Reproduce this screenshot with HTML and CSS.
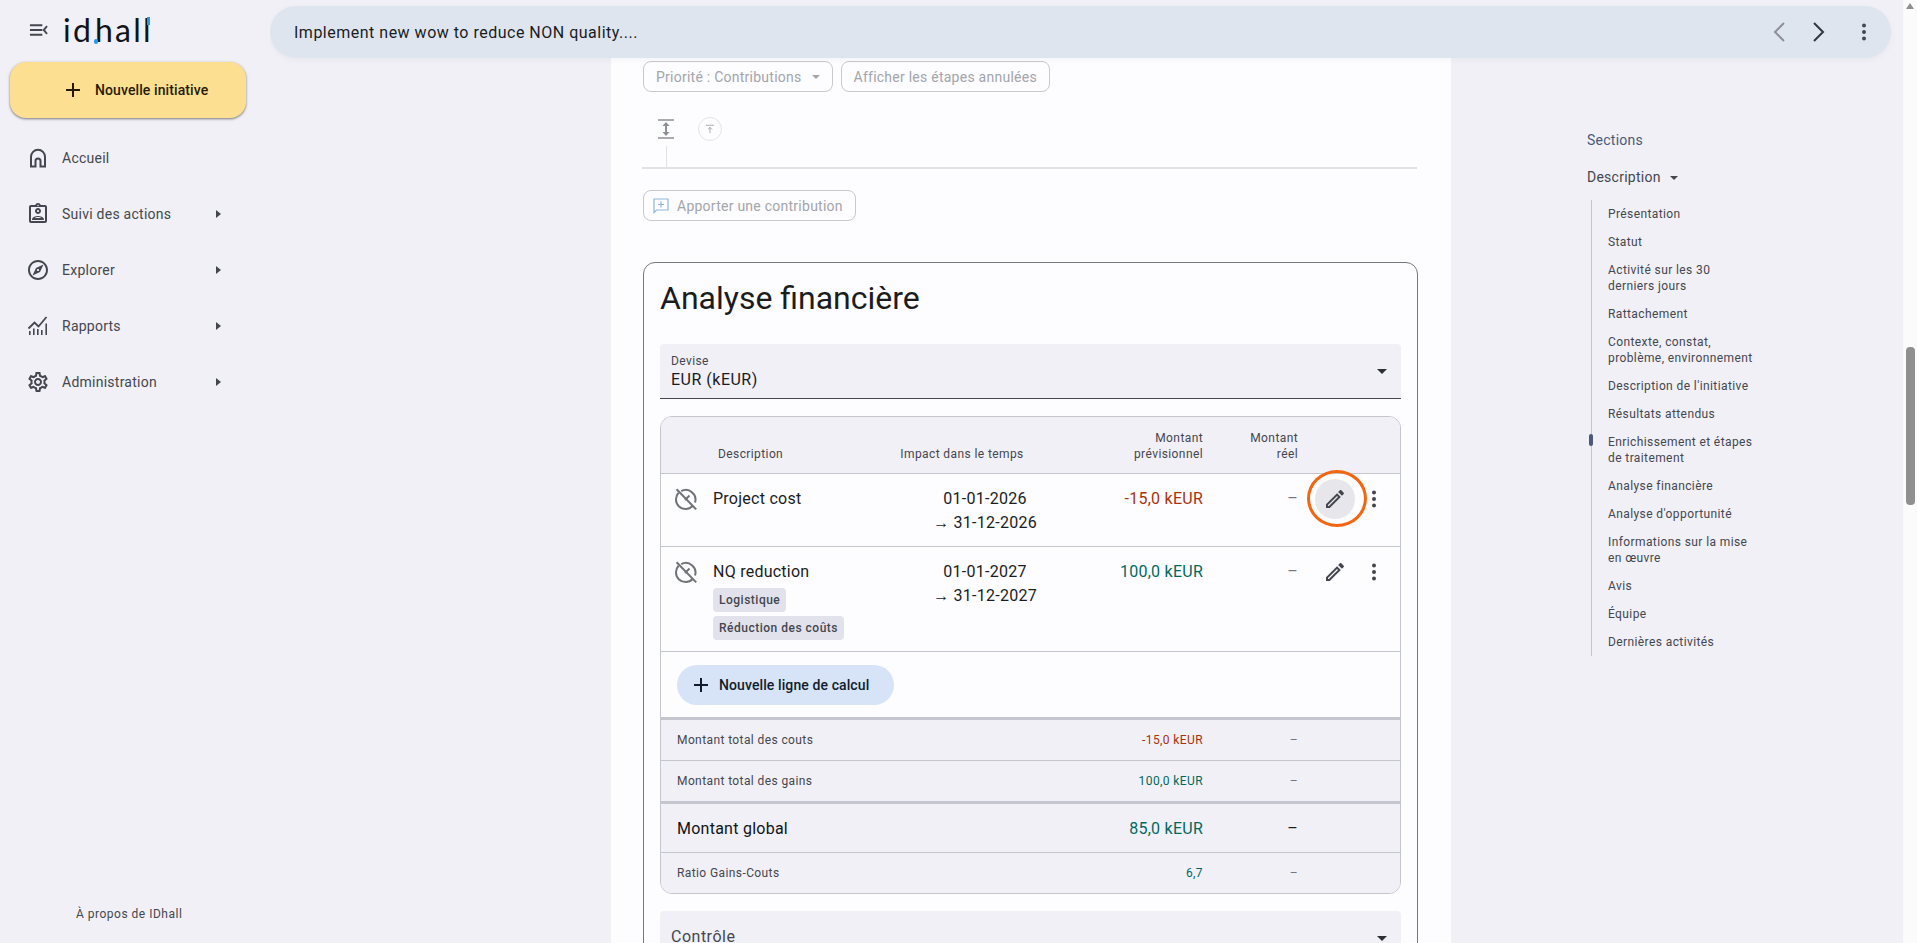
FILE: index.html
```html
<!DOCTYPE html>
<html lang="fr">
  <head>
    <meta charset="UTF-8" />
    <meta name="viewport" content="width=device-width, initial-scale=1.0" />
    <title>IDhall - Analyse financière</title>
    <link rel="stylesheet" href="styles.css">
  </head>
  <body>
    <!-- Shared icons -->
    <svg class="sprite" xmlns="http://www.w3.org/2000/svg">
      <symbol id="i-edit" viewBox="0 0 24 24"><path d="M3 17.25V21h3.75L17.81 9.94l-3.75-3.75L3 17.25zM5.92 19H5v-.92l9.06-9.06.92.92L5.92 19zM20.71 5.63l-2.34-2.34c-.2-.2-.45-.29-.71-.29s-.51.1-.7.29l-1.83 1.83 3.75 3.75 1.83-1.83c.39-.39.39-1.02 0-1.41z"/></symbol>
      <symbol id="i-more" viewBox="0 0 24 24"><circle cx="12" cy="5.5" r="2"/><circle cx="12" cy="12" r="2"/><circle cx="12" cy="18.5" r="2"/></symbol>
      <symbol id="i-plus" viewBox="0 0 24 24"><path d="M19 13h-6v6h-2v-6H5v-2h6V5h2v6h6v2z"/></symbol>
      <symbol id="i-gauge-off" viewBox="0 0 24 24"><g fill="none" stroke="currentColor" stroke-width="2"><path d="M7.2 4.2A9.6 9.6 0 0 1 21 15.5M18.6 19A9.6 9.6 0 0 1 4.6 5.8"/><path d="M2.6 2.2l19.6 20.2"/><path d="M11 13l4.5-4.5"/></g></symbol>
    </svg>

    <div class="app">
      <aside class="sidebar">
        <div class="brand">
          <svg class="menu-toggle" viewBox="0 0 20 14"><path d="M1 2h13M1 7h13M1 12h13M19 3l-3.5 4 3.5 4" fill="none" stroke="#44474f" stroke-width="2"/></svg>
          <div class="logo">
            <span>id</span><span class="logo-h">h</span><span>all</span>
            <i class="logo-dot"></i>
            <i class="logo-tip"></i>
          </div>
        </div>

        <button class="new-initiative">
          <svg class="icon"><use href="#i-plus"/></svg>
          Nouvelle initiative
        </button>

        <nav class="nav">
          <a class="nav-item">
            <svg class="icon" viewBox="0 0 24 24"><path d="M5 20.5V10.8a7 7 0 0 1 14 0v9.700h-4.500V15a2.500 2.500 0 0 0-5 0v5.500z" fill="none" stroke="currentColor" stroke-width="2"/></svg>
            <span>Accueil</span>
          </a>
          <a class="nav-item">
            <svg class="icon" viewBox="0 0 24 24"><path d="M19 3h-4.180C14.400 1.840 13.300 1 12 1s-2.400.84-2.820 2H5c-1.100 0-2 .9-2 2v14c0 1.100.9 2 2 2h14c1.100 0 2-.9 2-2V5c0-1.100-.9-2-2-2zm-7-.25c.41 0 .75.34.75.75s-.34.75-.75.75-.75-.34-.75-.75.34-.75.75-.75zM19 19H5V5h14v14zm-7-7c1.650 0 3-1.350 3-3s-1.350-3-3-3-3 1.350-3 3 1.350 3 3 3zm0-4c.55 0 1 .45 1 1s-.45 1-1 1-1-.45-1-1 .45-1 1-1zm6 9.590c0-2.500-3.970-3.580-6-3.580s-6 1.070-6 3.580V18h12v-.41zM8.480 16c.74-.51 2.230-1 3.520-1s2.780.49 3.520 1H8.480z"/></svg>
            <span>Suivi des actions</span>
            <b class="caret-right"></b>
          </a>
          <a class="nav-item">
            <svg class="icon" viewBox="0 0 24 24"><path d="M12 2C6.480 2 2 6.480 2 12s4.480 10 10 10 10-4.480 10-10S17.520 2 12 2zm0 18c-4.410 0-8-3.590-8-8s3.590-8 8-8 8 3.590 8 8-3.590 8-8 8zm-5.500-2.500l7.510-3.490L17.500 6.500 9.990 9.990 6.500 17.500zm5.500-6.600c.61 0 1.100.49 1.100 1.100s-.49 1.100-1.100 1.100-1.100-.49-1.100-1.100.49-1.100 1.100-1.100z"/></svg>
            <span>Explorer</span>
            <b class="caret-right"></b>
          </a>
          <a class="nav-item">
            <svg class="icon" viewBox="0 0 24 24"><path d="M3 21v-4h1.600v4zM7 21v-6.500h1.600V21zM11 21v-6h1.600v6zM15 21v-5h1.600v5zM19.400 21V9.500H21V21z"/><path d="M2.500 14.500l6-6 4 4L20.500 3" fill="none" stroke="currentColor" stroke-width="1.800"/></svg>
            <span>Rapports</span>
            <b class="caret-right"></b>
          </a>
          <a class="nav-item">
            <svg class="icon" viewBox="0 0 24 24"><path d="M19.430 12.980c.04-.32.07-.64.07-.98 0-.34-.03-.66-.07-.98l2.110-1.650c.19-.15.24-.42.12-.64l-2-3.460c-.09-.16-.26-.25-.44-.25-.06 0-.12.01-.17.03l-2.490 1c-.52-.4-1.080-.73-1.690-.98l-.38-2.650C14.460 2.180 14.250 2 14 2h-4c-.25 0-.46.18-.49.42l-.38 2.650c-.61.25-1.170.59-1.690.98l-2.490-1c-.06-.02-.12-.03-.18-.03-.17 0-.34.09-.43.25l-2 3.460c-.13.22-.07.49.12.64l2.110 1.650c-.04.32-.07.65-.07.98 0 .33.03.66.07.98l-2.110 1.650c-.19.15-.24.42-.12.64l2 3.460c.09.16.26.25.44.25.06 0 .12-.01.17-.03l2.490-1c.52.4 1.080.73 1.690.98l.38 2.650c.03.24.24.42.49.42h4c.25 0 .46-.18.49-.42l.38-2.650c.61-.25 1.170-.59 1.690-.98l2.490 1c.06.02.12.03.18.03.17 0 .34-.09.43-.25l2-3.460c.12-.22.07-.49-.12-.64l-2.110-1.650zm-1.980-1.710c.04.31.05.52.05.73 0 .21-.02.43-.05.73l-.14 1.130.89.7 1.080.84-.7 1.210-1.270-.51-1.040-.42-.9.68c-.43.32-.84.56-1.250.73l-1.060.43-.16 1.130-.2 1.350h-1.400l-.19-1.350-.16-1.130-1.060-.43c-.43-.18-.83-.41-1.230-.71l-.91-.7-1.060.43-1.270.51-.7-1.210 1.080-.84.89-.7-.14-1.130c-.03-.31-.05-.54-.05-.74s.02-.43.05-.73l.14-1.130-.89-.7-1.080-.84.7-1.210 1.270.51 1.040.42.9-.68c.43-.32.84-.56 1.250-.73l1.060-.43.16-1.130.2-1.350h1.390l.19 1.350.16 1.130 1.060.43c.43.18.83.41 1.230.71l.91.7 1.060-.43 1.270-.51.7 1.210-1.070.85-.89.7.14 1.130zM12 8c-2.210 0-4 1.790-4 4s1.790 4 4 4 4-1.790 4-4-1.790-4-4-4zm0 6c-1.100 0-2-.9-2-2s.9-2 2-2 2 .9 2 2-.9 2-2 2z"/></svg>
            <span>Administration</span>
            <b class="caret-right"></b>
          </a>
        </nav>

        <div class="about">À propos de IDhall</div>
      </aside>

      <div class="workspace">
        <header class="topbar">
          <div class="topbar-title">Implement new wow to reduce NON quality....</div>
          <svg class="chevron chevron-off" viewBox="0 0 14 24"><path d="M12 3L3 12l9 9" /></svg>
          <svg class="chevron" viewBox="0 0 14 24"><path d="M2 3l9 9-9 9" /></svg>
          <svg class="icon topbar-more"><use href="#i-more"/></svg>
        </header>

        <div class="content">
          <main class="panel">
            <div class="filters">
              <div class="ghost-btn">Priorité : Contributions <b class="caret-down"></b></div>
              <div class="ghost-btn">Afficher les étapes annulées</div>
            </div>

            <div class="timeline-tools">
              <svg class="tool-expand" viewBox="0 0 16 20"><path d="M0 1h16M0 19h16" stroke="#8e9098" stroke-width="1.500"/><path d="M8 3l3.500 4H9v6h2.500L8 17l-3.500-4H7V7H4.500z" fill="#8e9098"/></svg>
              <div class="tool-top">
                <svg viewBox="0 0 12 12"><path d="M1 1.500h10M6 11V4M3.500 6.500L6 4l2.500 2.500" fill="none" stroke="#9a9ca4" stroke-width="1"/></svg>
              </div>
            </div>
            <div class="timeline-stem"></div>

            <div class="ghost-btn contribute">
              <svg viewBox="0 0 16 16"><path d="M1 1h14v11H3.500L1 14.500z M8 3.500v6M5 6.500h6" fill="none" stroke="#8fb8dc" stroke-width="1.200"/></svg>
              Apporter une contribution
            </div>

            <section class="card">
              <h2 class="card-title">Analyse financière</h2>

              <div class="select-field">
                <label>Devise</label>
                <div class="select-value">EUR (kEUR)</div>
                <b class="caret-down dark"></b>
              </div>

              <div class="calc-table">
                <div class="calc-row calc-head">
                  <div></div>
                  <div class="head-desc">Description</div>
                  <div class="head-impact">Impact dans le temps</div>
                  <div class="num">Montant<br>prévisionnel</div>
                  <div class="num">Montant<br>réel</div>
                  <div></div>
                </div>

                <div class="calc-row line first-line">
                  <svg class="icon gauge"><use href="#i-gauge-off"/></svg>
                  <div class="line-name">Project cost</div>
                  <div class="line-dates">01-01-2026<br>→ 31-12-2026</div>
                  <div class="num cost">-15,0 kEUR</div>
                  <div class="num muted">–</div>
                  <div class="line-actions">
                    <span class="edit-btn active">
                      <svg class="icon"><use href="#i-edit"/></svg>
                      <i class="ring"></i>
                    </span>
                    <svg class="icon"><use href="#i-more"/></svg>
                  </div>
                </div>

                <div class="calc-row line second-line">
                  <svg class="icon gauge"><use href="#i-gauge-off"/></svg>
                  <div class="line-name">
                    NQ reduction
                    <span class="tag">Logistique</span>
                    <span class="tag">Réduction des coûts</span>
                  </div>
                  <div class="line-dates">01-01-2027<br>→ 31-12-2027</div>
                  <div class="num gain">100,0 kEUR</div>
                  <div class="num muted">–</div>
                  <div class="line-actions">
                    <span class="edit-btn">
                      <svg class="icon"><use href="#i-edit"/></svg>
                    </span>
                    <svg class="icon"><use href="#i-more"/></svg>
                  </div>
                </div>

                <div class="add-row">
                  <button class="add-line">
                    <svg class="icon"><use href="#i-plus"/></svg>
                    Nouvelle ligne de calcul
                  </button>
                </div>

                <div class="calc-row total heavy">
                  <div class="total-name">Montant total des couts</div>
                  <div class="num cost">-15,0 kEUR</div>
                  <div class="num muted">–</div>
                </div>
                <div class="calc-row total">
                  <div class="total-name">Montant total des gains</div>
                  <div class="num gain">100,0 kEUR</div>
                  <div class="num muted">–</div>
                </div>
                <div class="calc-row total global heavy">
                  <div class="total-name">Montant global</div>
                  <div class="num gain">85,0 kEUR</div>
                  <div class="num">–</div>
                </div>
                <div class="calc-row total">
                  <div class="total-name">Ratio Gains-Couts</div>
                  <div class="num gain">6,7</div>
                  <div class="num muted">–</div>
                </div>
              </div>

              <div class="select-field control">
                <div class="control-value">Contrôle</div>
                <b class="caret-down dark"></b>
              </div>
            </section>
          </main>

          <aside class="toc">
            <div class="toc-title">Sections</div>
            <div class="toc-group">Description <b class="caret-down"></b></div>
            <ul class="toc-list">
              <li>Présentation</li>
              <li>Statut</li>
              <li>Activité sur les 30<br>derniers jours</li>
              <li>Rattachement</li>
              <li>Contexte, constat,<br>problème, environnement</li>
              <li>Description de l'initiative</li>
              <li>Résultats attendus</li>
              <li class="current">Enrichissement et étapes<br>de traitement</li>
              <li>Analyse financière</li>
              <li>Analyse d'opportunité</li>
              <li>Informations sur la mise<br>en œuvre</li>
              <li>Avis</li>
              <li>Équipe</li>
              <li>Dernières activités</li>
            </ul>
          </aside>
        </div>
      </div>

      <div class="scrollbar">
        <b class="scroll-up"></b>
        <div class="scroll-thumb"></div>
      </div>
    </div>
  </body>
</html>
```

FILE: styles.css
```css
* {
  box-sizing: border-box;
}
body {
  margin: 0;
  background-color: #f0f0f6;
  color: #1a1c1e;
  font-family: Roboto, "Liberation Sans", sans-serif;
  overflow: hidden;
}
.sprite {
  display: none;
}
.icon {
  width: 24px;
  height: 24px;
  flex: none;
  fill: currentColor;
}
.app {
  display: flex;
  height: 943px;
}

/* Sidebar */
.sidebar {
  width: 270px;
  flex: none;
  display: flex;
  flex-direction: column;
  position: relative;
}
.brand {
  display: flex;
  align-items: center;
  height: 62px;
  padding: 0 0 3px 29px;
}
.menu-toggle {
  width: 19px;
  height: 14px;
}
.logo {
  position: relative;
  margin-left: 15px;
  font-family: Lato, sans-serif;
  font-weight: 400;
  font-size: 32px;
  line-height: 32px;
  letter-spacing: 2.2px;
  color: #101418;
}
.logo-h {
  margin-left: 2px;
}
.logo-dot {
  position: absolute;
  left: 31px;
  top: 25px;
  width: 4px;
  height: 5px;
  background-color: #1e9bf0;
  border-radius: 2px;
}
.logo-tip {
  position: absolute;
  right: 3px;
  top: 3px;
  width: 3px;
  height: 8px;
  background-color: #1e9bf0;
}
.new-initiative {
  display: flex;
  align-items: center;
  gap: 10px;
  width: 236px;
  height: 56px;
  margin-left: 10px;
  padding: 0 0 0 51px;
  border: 0;
  border-radius: 16px;
  background-color: #fddf92;
  box-shadow: 0 1px 3px rgba(0, 0, 0, 0.35), 0 1px 2px rgba(0, 0, 0, 0.2);
  color: #241a00;
  font-family: inherit;
  font-size: 14px;
  font-weight: 500;
  letter-spacing: 0.1px;
}
.nav {
  margin-top: 12px;
}
.nav-item {
  display: flex;
  align-items: center;
  height: 56px;
  padding-left: 26px;
  color: #44474f;
  font-size: 14px;
  font-weight: 400;
  letter-spacing: 0.25px;
}
.nav-item span {
  width: 150px;
  margin-left: 12px;
}
.caret-right {
  width: 0;
  height: 0;
  margin-left: 4px;
  border-left: 5px solid #44474f;
  border-top: 4px solid transparent;
  border-bottom: 4px solid transparent;
}
.about {
  margin-top: auto;
  padding: 0 0 22px 76px;
  color: #44474f;
  font-size: 12px;
  letter-spacing: 0.5px;
}

/* Workspace */
.workspace {
  flex: 1;
  min-width: 0;
  display: flex;
  flex-direction: column;
  height: 943px;
  overflow: hidden;
}
.topbar {
  position: relative;
  z-index: 2;
  display: flex;
  align-items: center;
  flex: none;
  height: 52px;
  margin: 6px 12px 0 0;
  padding: 0 15px 0 24px;
  border-radius: 26px;
  background-color: #dfe5ef;
  box-shadow: 0 2px 6px rgba(0, 0, 0, 0.04);
  color: #1a1c1e;
  font-size: 16px;
  letter-spacing: 0.5px;
}
.topbar-title {
  flex: 1;
}
.chevron {
  width: 14px;
  height: 24px;
  margin-right: 26px;
  fill: none;
  stroke: #2f3640;
  stroke-width: 2;
}
.chevron-off {
  stroke: #8e9098;
}
.topbar-more {
  color: #44474f;
}
.content {
  flex: 1;
  min-height: 0;
  display: flex;
}

/* Panel */
.panel {
  width: 840px;
  margin-left: 341px;
  padding: 3px 33px 0 32px;
  background-color: #fdfcff;
  overflow: hidden;
}
.filters {
  display: flex;
  gap: 8px;
}
.ghost-btn {
  display: flex;
  align-items: center;
  height: 31px;
  padding: 0 12px;
  border: 1px solid #c8c9cf;
  border-radius: 8px;
  color: #a3a5ab;
  font-size: 14px;
  letter-spacing: 0.25px;
}
.caret-down {
  display: inline-block;
  width: 0;
  height: 0;
  margin-left: 10px;
  border-top: 4px solid #a3a5ab;
  border-left: 4px solid transparent;
  border-right: 4px solid transparent;
}
.caret-down.dark {
  border-top-color: #2c2f35;
  border-left-width: 5px;
  border-right-width: 5px;
  border-top-width: 5px;
}
.timeline-tools {
  display: flex;
  align-items: center;
  gap: 24px;
  height: 34px;
  margin-top: 20px;
  padding-left: 15px;
}
.tool-expand {
  width: 16px;
  height: 20px;
}
.tool-top {
  display: flex;
  align-items: center;
  justify-content: center;
  width: 24px;
  height: 24px;
  border: 1px solid #e4e4ea;
  border-radius: 50%;
}
.tool-top svg {
  width: 10px;
  height: 10px;
}
.timeline-stem {
  height: 23px;
  margin-top: 0;
  margin-left: 23px;
  width: 1px;
  background-color: #e1e2e8;
}
.contribute {
  width: 213px;
  margin-top: 21px;
  padding: 0 0 0 9px;
  border-radius: 8px;
  gap: 8px;
  position: relative;
}
.contribute svg {
  width: 16px;
  height: 16px;
}
.panel > .timeline-stem {
  box-shadow: none;
}
.timeline-stem::after {
  content: "";
  display: block;
  height: 2px;
  width: 775px;
  margin-left: -24px;
  transform: translateY(21px);
  background-color: #e1e2e8;
}

/* Card */
.card {
  margin-top: 41px;
  padding: 0 16px;
  min-height: 900px;
  border: 1px solid #73777f;
  border-radius: 12px;
}
.card-title {
  margin: 15px 0 0;
  font-size: 32px;
  line-height: 40px;
  font-weight: 400;
}
.select-field {
  position: relative;
  height: 55px;
  margin-top: 26px;
  padding: 9px 10px 0 11px;
  border-bottom: 1px solid #44474f;
  border-radius: 4px 4px 0 0;
  background-color: #f1f0f6;
}
.select-field label {
  display: block;
  color: #44474f;
  font-size: 12px;
  line-height: 16px;
  letter-spacing: 0.4px;
}
.select-value {
  font-size: 16px;
  line-height: 22px;
  letter-spacing: 0.5px;
}
.select-field .caret-down {
  position: absolute;
  right: 14px;
  top: 25px;
}

/* Financial table */
.calc-table {
  margin-top: 17px;
  border: 1px solid #c3c6cf;
  border-radius: 12px;
  overflow: hidden;
}
.calc-row {
  display: grid;
  grid-template-columns: 52px 172px 200px 118px 95px 1fr;
}
.num {
  text-align: right;
}
.calc-head {
  height: 57px;
  padding-top: 11px;
  border-bottom: 1px solid #c3c6cf;
  background-color: #f1f0f6;
  color: #44474f;
  font-size: 12px;
  line-height: 16px;
  letter-spacing: 0.4px;
  align-items: end;
  padding-bottom: 11px;
}
.head-desc {
  padding-left: 5px;
}
.head-impact {
  padding-right: 46px;
  text-align: center;
}
.line {
  padding-top: 13px;
  border-bottom: 1px solid #c3c6cf;
  font-size: 16px;
  line-height: 24px;
  letter-spacing: 0.25px;
}
.first-line {
  height: 73px;
}
.second-line {
  height: 105px;
}
.gauge {
  margin-left: 13px;
  color: #6f7379;
}
.line-name {
  display: flex;
  flex-direction: column;
  align-items: flex-start;
  gap: 4px;
}
.line-dates {
  text-align: center;
}
.cost {
  color: #a8320d;
}
.gain {
  color: #00695f;
}
.muted {
  color: #74777f;
}
.line-actions {
  display: flex;
  align-items: flex-start;
  gap: 7px;
  margin-top: -8px;
  padding-left: 17px;
  color: #44474f;
}
.line-actions > .icon {
  margin-top: 8px;
}
.edit-btn {
  position: relative;
  display: flex;
  align-items: center;
  justify-content: center;
  width: 40px;
  height: 40px;
  border-radius: 50%;
}
.edit-btn.active {
  background-color: #e7e7eb;
}
.ring {
  position: absolute;
  left: -8px;
  top: -9px;
  width: 60px;
  height: 57px;
  border: 3px solid #f4650f;
  border-radius: 50%;
}
.tag {
  padding: 4px 6px;
  border-radius: 4px;
  background-color: #e1e2ec;
  color: #44474f;
  font-size: 12px;
  font-weight: 500;
  line-height: 16px;
  letter-spacing: 0.5px;
}
.add-row {
  height: 65px;
  padding: 13px 0 0 16px;
}
.add-line {
  display: flex;
  align-items: center;
  gap: 6px;
  width: 217px;
  height: 40px;
  padding: 0 0 0 12px;
  border: 0;
  border-radius: 20px;
  background-color: #d7e3f7;
  color: #101c2b;
  font-family: inherit;
  font-size: 14px;
  font-weight: 500;
  letter-spacing: 0.1px;
}
.total {
  grid-template-columns: 424px 118px 95px 1fr;
  align-items: center;
  height: 41px;
  padding-left: 0;
  border-top: 1px solid #c3c6cf;
  background-color: #f1f0f6;
  font-size: 12px;
  letter-spacing: 0.4px;
}
.total.heavy {
  border-top: 3px solid #c3c6cf;
  height: 43px;
}
.total-name {
  padding-left: 16px;
  color: #44474f;
}
.global {
  height: 51px !important;
  font-size: 16px;
  letter-spacing: 0.25px;
}
.global .total-name {
  color: #101418;
}
.control {
  margin-top: 17px;
  height: 60px;
  padding-top: 14px;
  border-bottom: 0;
}
.control-value {
  color: #44474f;
  font-size: 16px;
  line-height: 24px;
  letter-spacing: 0.5px;
}

/* Right column */
.toc {
  margin-left: 136px;
  padding-top: 73px;
  width: 200px;
  color: #44474f;
}
.toc-title {
  color: #4a5a78;
  font-size: 14px;
  line-height: 18px;
  letter-spacing: 0.25px;
}
.toc-group {
  margin-top: 19px;
  font-size: 14px;
  line-height: 18px;
  letter-spacing: 0.25px;
}
.toc-group .caret-down {
  border-top-color: #44474f;
  margin-left: 6px;
  vertical-align: 2px;
}
.toc-list {
  margin: 14px 0 0 4px;
  padding: 6px 0 6px 16px;
  list-style: none;
  border-left: 1px solid #c3c6cf;
  font-size: 12px;
  line-height: 16px;
  letter-spacing: 0.4px;
}
.toc-list li {
  position: relative;
  margin-bottom: 12px;
}
.toc-list li:last-child {
  margin-bottom: 0;
}
.current::before {
  content: "";
  position: absolute;
  left: -19px;
  top: 0;
  width: 4px;
  height: 12px;
  border-radius: 2px;
  background-color: #4a5a78;
}

/* Fake browser scrollbar */
.scrollbar {
  position: relative;
  width: 14px;
  flex: none;
  background-color: #fbfbfb;
}
.scroll-up {
  position: absolute;
  left: 3px;
  top: 3px;
  border-bottom: 6px solid #8f8f8f;
  border-left: 4px solid transparent;
  border-right: 4px solid transparent;
}
.scroll-thumb {
  position: absolute;
  left: 3px;
  top: 347px;
  width: 9px;
  height: 158px;
  border-radius: 4px;
  background-color: #8f8f8f;
}
```
